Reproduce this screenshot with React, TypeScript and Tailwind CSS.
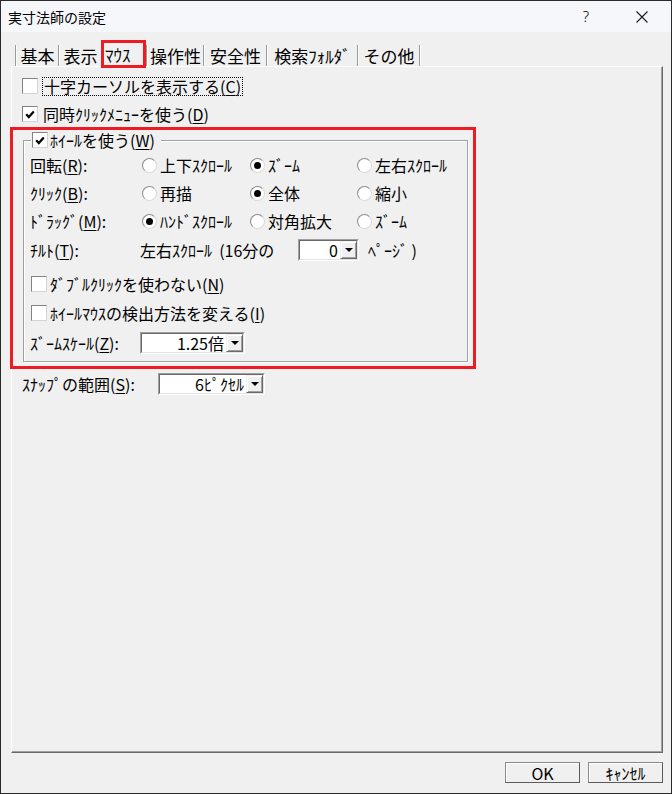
import type { ReactNode } from "react"

const jp = "font-['Noto_Sans_CJK_JP','Noto_Sans',sans-serif]"

function CheckBox({ checked = false }: { checked?: boolean }) {
  return (
    <span className="flex h-[16px] w-[16px] shrink-0 items-center justify-center border border-t-[#838383] border-l-[#838383] border-r-[#d4d4d4] border-b-[#d4d4d4] bg-white">
      {checked && (
        <svg width="10" height="9" viewBox="0 0 10 9">
          <path d="M1.2 4.2 L3.8 7 L8.8 1.4" fill="none" stroke="#000" strokeWidth="2.2" />
        </svg>
      )}
    </span>
  )
}

function Radio({ checked = false }: { checked?: boolean }) {
  return (
    <span className="flex h-[15px] w-[15px] shrink-0 items-center justify-center rounded-full border border-[#8c8c8c] border-r-[#dadada] border-b-[#dadada] bg-white">
      {checked && <span className="h-[7px] w-[7px] rounded-full bg-black" />}
    </span>
  )
}

function Key({ k }: { k: string }) {
  return (
    <>
      (<span className="underline underline-offset-[2px]">{k}</span>)
    </>
  )
}

function Combo({ value, className }: { value: string; className: string }) {
  return (
    <span
      className={`flex h-[22px] shrink-0 items-stretch border border-t-[#a0a0a0] border-l-[#a0a0a0] border-r-white border-b-white ${className}`}
    >
      <span className="flex flex-1 items-stretch border border-t-[#696969] border-l-[#696969] border-r-[#e3e3e3] border-b-[#e3e3e3] bg-white">
        <span className="flex flex-1 items-center justify-end pr-[2px] text-[16px] leading-none">{value}</span>
        <span className="flex w-[17px] items-center justify-center border border-t-[#f0f0f0] border-l-[#f0f0f0] border-r-[#696969] border-b-[#696969] bg-[#f0f0f0] shadow-[inset_1px_1px_0_white,inset_-1px_-1px_0_#a0a0a0]">
          <svg width="8" height="4" viewBox="0 0 8 4">
            <path d="M0 0h8L4 4z" fill="#000" />
          </svg>
        </span>
      </span>
    </span>
  )
}

function RadioCell({ label, checked }: { label: string; checked?: boolean }) {
  return (
    <span className="flex items-center gap-[3px]">
      <Radio checked={checked} />
      <span>{label}</span>
    </span>
  )
}

const tabs = [
  { label: "基本", w: "w-[41px]" },
  { label: "表示", w: "w-[41px]" },
  { label: "ﾏｳｽ", w: "w-[45px]", active: true },
  { label: "操作性", w: "w-[55px]" },
  { label: "安全性", w: "w-[61px]" },
  { label: "検索ﾌｫﾙﾀﾞ", w: "w-[89px]" },
  { label: "その他", w: "w-[60px]" },
]

const radioRows: { label: ReactNode; options: [string, boolean][] }[] = [
  {
    label: <>回転<Key k="R" />:</>,
    options: [["上下ｽｸﾛｰﾙ", false], ["ｽﾞｰﾑ", true], ["左右ｽｸﾛｰﾙ", false]],
  },
  {
    label: <>ｸﾘｯｸ<Key k="B" />:</>,
    options: [["再描", false], ["全体", true], ["縮小", false]],
  },
  {
    label: <>ﾄﾞﾗｯｸﾞ<Key k="M" />:</>,
    options: [["ﾊﾝﾄﾞｽｸﾛｰﾙ", true], ["対角拡大", false], ["ｽﾞｰﾑ", false]],
  },
]

function Separator() {
  return (
    <span className="flex h-full shrink-0">
      <span className="w-[1px] bg-[#9a9a9a]" />
      <span className="w-[1px] bg-white" />
    </span>
  )
}

export default function App() {
  return (
    <div className={`flex h-[794px] w-[672px] flex-col border border-[#2a2a2a] bg-[#f0f0f0] text-black ${jp}`}>
      {/* Title bar */}
      <div className="flex h-[31px] shrink-0 items-center bg-[#f5f7fb]">
        <span className="ml-[7px] text-[14px] leading-none">実寸法師の設定</span>
        <div className="ml-auto flex h-full">
          <span className="flex w-[56px] items-center justify-center font-['Noto_Sans',sans-serif] text-[15px] font-light">?</span>
          <span className="mr-[1px] flex w-[56px] items-center justify-center">
            <svg width="12" height="12" viewBox="0 0 12 12">
              <path d="M0.5 0.5 L11.5 11.5 M11.5 0.5 L0.5 11.5" stroke="#1a1a1a" strokeWidth="1.1" />
            </svg>
          </span>
        </div>
      </div>

      {/* Body */}
      <div className="flex flex-1 flex-col pt-[13px]">
        {/* Tabs */}
        <div className="ml-[14px] flex h-[21px] items-end text-[17px] leading-none">
          {tabs.map((t, i) =>
            t.active ? (
              <span
                key={i}
                className={`relative z-10 mb-[-2px] flex h-[28px] items-center border-[3px] border-[#ed1c24] pl-[1px] ${t.w}`}
              >
                {t.label}
              </span>
            ) : (
              <span key={i} className="flex h-full">
                <Separator />
                <span className={`flex h-full items-center justify-center ${t.w}`}>{t.label}</span>
                {i === tabs.length - 1 && <Separator />}
              </span>
            ),
          )}
        </div>

        {/* Panel */}
        <div className="ml-[10px] flex h-[687px] w-[652px] flex-col border border-t-white border-l-white border-r-[#696969] border-b-[#696969] pt-[9px] text-[16px] leading-none shadow-[inset_-1px_-1px_0_#a0a0a0]">
          <div className="flex h-[20px] items-center pl-[10px]">
            <CheckBox />
            <span className="ml-[4px] flex h-[19px] items-center border border-dotted border-black px-[1px]">
              十字カーソルを表示する<Key k="C" />
            </span>
          </div>
          <div className="mt-[8px] flex h-[20px] items-center pl-[10px]">
            <CheckBox checked />
            <span className="ml-[5px]">
              同時ｸﾘｯｸﾒﾆｭｰを使う<Key k="D" />
            </span>
          </div>

          {/* Wheel group, highlighted */}
          <div className="ml-[-2px] mt-[3px] w-[466px] border-[3px] border-[#ed1c24] pb-[4px] pl-[10px] pt-[1px]">
            <fieldset className="w-[445px] border border-[#a0a0a0] shadow-[inset_1px_1px_0_white,1px_1px_0_white]">
              <legend className="ml-[7px] flex h-[18px] items-center bg-[#f0f0f0] pl-[1px] pr-[6px]">
                <CheckBox checked />
                <span className="ml-[2px]">
                  ﾎｲｰﾙを使う<Key k="W" />
                </span>
              </legend>
              <div className="flex flex-col pb-[7px] pl-[6px] pt-[2px]">
                {radioRows.map((r, i) => (
                  <div key={i} className="grid h-[28px] grid-cols-[112px_108px_107px_1fr] items-center">
                    <span>{r.label}</span>
                    {r.options.map(([label, checked], j) => (
                      <RadioCell key={j} label={label} checked={checked} />
                    ))}
                  </div>
                ))}
                <div className="flex h-[30px] items-center">
                  <span className="w-[110px] shrink-0">
                    ﾁﾙﾄ<Key k="T" />:
                  </span>
                  <span className="w-[158px] shrink-0 whitespace-pre">左右ｽｸﾛｰﾙ  (16分の</span>
                  <Combo value="0" className="w-[61px]" />
                  <span className="ml-[9px] whitespace-pre">ﾍﾟｰｼﾞ )</span>
                </div>
                <div className="mt-[9px] flex h-[20px] items-center pl-[1px]">
                  <CheckBox />
                  <span className="ml-[3px]">
                    ﾀﾞﾌﾞﾙｸﾘｯｸを使わない<Key k="N" />
                  </span>
                </div>
                <div className="mt-[9px] flex h-[20px] items-center pl-[1px]">
                  <CheckBox />
                  <span className="ml-[3px]">
                    ﾎｲｰﾙﾏｳｽの検出方法を変える<Key k="I" />
                  </span>
                </div>
                <div className="mt-[9px] flex h-[22px] items-center">
                  <span className="w-[110px] shrink-0">
                    ｽﾞｰﾑｽｹｰﾙ<Key k="Z" />:
                  </span>
                  <Combo value="1.25倍" className="w-[105px]" />
                </div>
              </div>
            </fieldset>
          </div>

          <div className="mt-[4px] flex h-[22px] items-center pl-[10px]">
            <span className="w-[136px] shrink-0">
              ｽﾅｯﾌﾟの範囲<Key k="S" />:
            </span>
            <Combo value="6ﾋﾟｸｾﾙ" className="w-[107px]" />
          </div>
        </div>

        {/* Buttons */}
        <div className="ml-[10px] mt-[9px] flex w-[652px] justify-end gap-[8px] text-[16px] leading-none">
          <button className="h-[21px] w-[75px] border border-[#8a8a8a] border-r-[#5a5a5a] border-b-[#5a5a5a] bg-[#f0f0f0] shadow-[inset_1px_1px_0_white]">
            OK
          </button>
          <button className="h-[21px] w-[75px] border border-[#8a8a8a] border-r-[#5a5a5a] border-b-[#5a5a5a] bg-[#f0f0f0] shadow-[inset_1px_1px_0_white]">
            ｷｬﾝｾﾙ
          </button>
        </div>
      </div>
    </div>
  )
}
